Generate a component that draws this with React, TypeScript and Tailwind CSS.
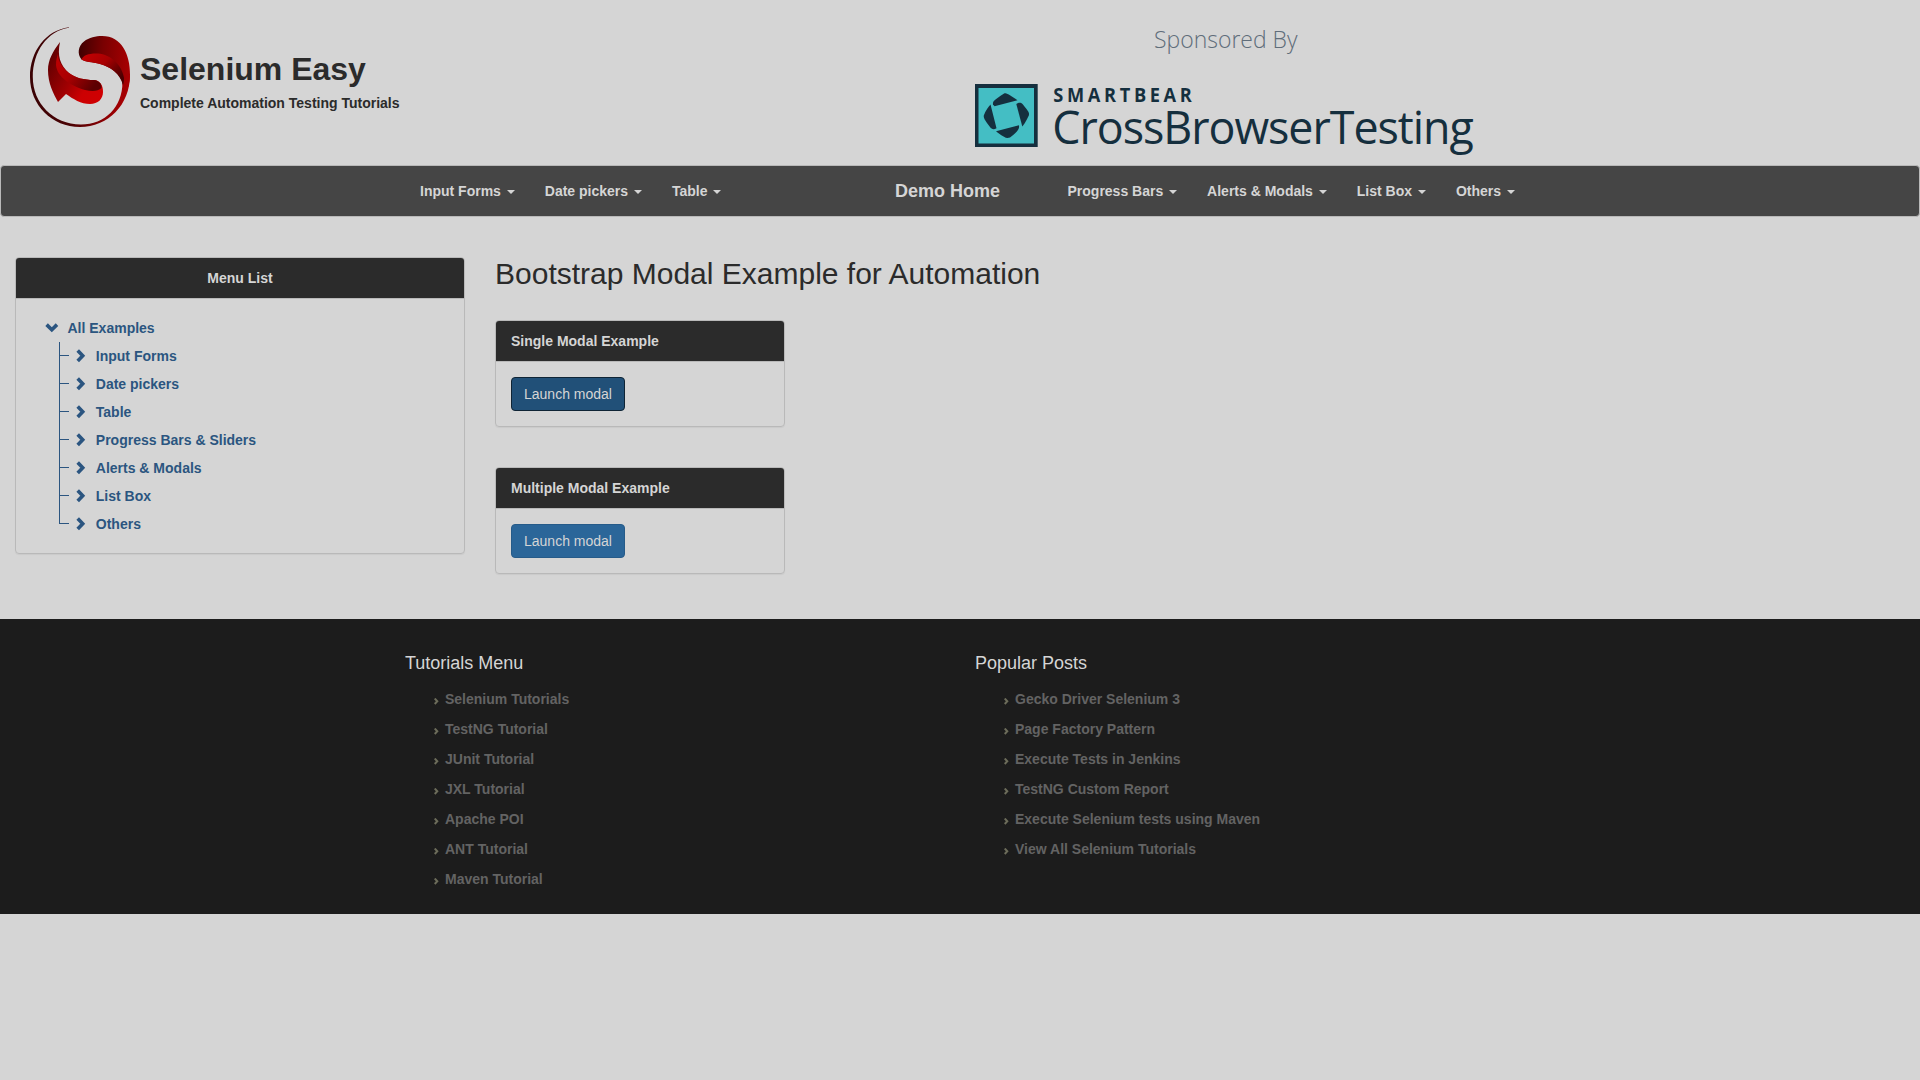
import React from "react";

const leftNav = ["Input Forms", "Date pickers", "Table"];
const rightNav = ["Progress Bars", "Alerts & Modals", "List Box", "Others"];
const treeItems = [
  "Input Forms",
  "Date pickers",
  "Table",
  "Progress Bars & Sliders",
  "Alerts & Modals",
  "List Box",
  "Others",
];
const tutorials = [
  "Selenium Tutorials",
  "TestNG Tutorial",
  "JUnit Tutorial",
  "JXL Tutorial",
  "Apache POI",
  "ANT Tutorial",
  "Maven Tutorial",
];
const posts = [
  "Gecko Driver Selenium 3",
  "Page Factory Pattern",
  "Execute Tests in Jenkins",
  "TestNG Custom Report",
  "Execute Selenium tests using Maven",
  "View All Selenium Tutorials",
];

function SeleniumLogo() {
  return (
    <svg width="100" height="100" viewBox="0 0 100 100" className="shrink-0">
      <defs>
        <linearGradient id="ring" x1="0" y1="0" x2="1" y2="0">
          <stop offset="0" stopColor="#3a0204" />
          <stop offset="0.4" stopColor="#4a0204" />
          <stop offset="0.75" stopColor="#8c0003" />
          <stop offset="1" stopColor="#b00002" />
        </linearGradient>
        <linearGradient id="cap" x1="0" y1="0.4" x2="1" y2="0.5">
          <stop offset="0" stopColor="#420001" />
          <stop offset="0.45" stopColor="#7a0001" />
          <stop offset="1" stopColor="#a80002" />
        </linearGradient>
        <linearGradient id="fold" x1="0" y1="0" x2="1" y2="0.7">
          <stop offset="0" stopColor="#c60002" />
          <stop offset="0.5" stopColor="#a80002" />
          <stop offset="0.8" stopColor="#6a0001" />
          <stop offset="1" stopColor="#4a0001" />
        </linearGradient>
        <linearGradient id="base" x1="0" y1="0.3" x2="1" y2="0.9">
          <stop offset="0" stopColor="#620001" />
          <stop offset="0.45" stopColor="#a20002" />
          <stop offset="0.7" stopColor="#cc0002" />
          <stop offset="1" stopColor="#d00002" />
        </linearGradient>
        <linearGradient id="band" x1="0" y1="0" x2="1" y2="0.6">
          <stop offset="0" stopColor="#c00002" />
          <stop offset="0.5" stopColor="#a80002" />
          <stop offset="1" stopColor="#5c0001" />
        </linearGradient>
      </defs>
      <path
        d="M39 0.200C16 3 0 24 0 50C0 78 22 100 50 100C78 100 100 78 100 48L92.500 55C92.500 80 75 97.500 51 97.500C23 97.500 2.800 76 2.800 50C2.800 25 17 4 39 0.800Z"
        fill="url(#ring)"
      />
      <path
        d="M51.500 32.500C47 27 48 19 54 14.500C59 10.500 66 9 72 9C82 9 89 13.500 93.500 21C98 28.500 100 37 100 48C100 56 97 66 92 74C93 66 94 59 91.500 53C88 45 80 40 70 37C62 35 55 35 51.500 32.500Z"
        fill="url(#cap)"
      />
      <path
        d="M51.500 32.500C53 28 60 26 68 26.500C81 27.500 92 38 94 51C94 54 93.500 57 93 58C90 47 81 40 70 37C62 35 55 35 51.500 32.500Z"
        fill="url(#fold)"
      />
      <path
        d="M30 15C23 24 18 33 18 43C18 56 23 66 28 75L36 67C43 72 51 77 60 77C68 77 73 72 73 65C73 58 70 53.500 64 53C54 53 46 51 39 46C30 38 27 29 30 15Z"
        fill="url(#base)"
      />
      <path
        d="M28 27C28 33 31 40 39 46C46 51 54 53 64 53C69 53.500 72 57 71.500 61C68 64.500 62 64.500 55 63C41 59 27 50 26 38C26 33 27 30 28 27Z"
        fill="url(#band)"
      />
    </svg>
  );
}

function SponsorLogo() {
  return (
    <svg width="510" height="85" viewBox="975 80 510 85">
      <rect x="975" y="84" width="62.700" height="63" fill="#152f3e" />
      <rect x="978.500" y="88" width="55.500" height="55.500" fill="#44bec4" />
      <g fill="#152f3e">
        <path d="M993 104.500C992.500 101 994 100 1004.500 93.200C1007 93.200 1009 94.300 1017.500 100.200L994.500 106.300Z" />
        <path d="M1016.300 104C1019 102 1021 102.500 1022.500 104C1029 112 1029.500 113 1028.800 115.500C1026 121.500 1024 124.500 1022.300 126.500Z" />
        <path d="M1019 125.200C1019.500 129 1018 131 1010 137.500C1007.500 138.400 1006 138 1004 136.800C1000 134.500 998 133 996 131.200Z" />
        <path d="M996.500 128.300C993.500 130 991.500 129 990 127C984.500 119.500 983.500 118 983.800 115.500C985.500 110.500 988.500 107 990.500 104.500Z" />
      </g>
      <text
        transform="translate(1053.300 102.200) scale(0.93 1)"
        fontFamily="'Open Sans', sans-serif"
        fontWeight="700"
        fontSize="19.600"
        textLength="149"
        fill="#152f3e"
      >
        SMARTBEAR
      </text>
      <text
        x="1052.300"
        y="143.500"
        fontFamily="'Open Sans', sans-serif"
        fontWeight="400"
        fontSize="44.800"
        textLength="421.500"
        fill="#152f3e"
      >
        CrossBrowserTesting
      </text>
    </svg>
  );
}

function NavItem({ label }: { label: string }) {
  return (
    <li className="px-[15px] py-[15px]">
      <a className="block whitespace-pre">
        {label + " "}
        <span className="ml-[2px] inline-block h-0 w-0 border-x-4 border-t-4 border-x-transparent border-t-[#d5d5d5] align-middle" />
      </a>
    </li>
  );
}

function Chevron({ down }: { down?: boolean }) {
  return (
    <svg width="14" height="14" viewBox="0 0 14 14" className="shrink-0">
      <path
        d={down ? "M1.600 3.600L6.800 8.700L12 3.600" : "M3.700 1.500L8.700 6.700L3.700 11.900"}
        fill="none"
        stroke="#2b5580"
        strokeWidth="3.600"
      />
    </svg>
  );
}

function Panel({
  title,
  center,
  children,
}: {
  title: string;
  center?: boolean;
  children: React.ReactNode;
}) {
  return (
    <section className="rounded-[4px] border border-[#b9b9b9] shadow-[0_1px_1px_rgba(0,0,0,0.05)]">
      <h3
        className={
          "rounded-t-[3px] border-b border-[#b9b9b9] bg-[#2b2b2b] px-[15px] py-[10px] font-bold text-[#d5d5d5] " +
          (center ? "text-center" : "")
        }
      >
        {title}
      </h3>
      {children}
    </section>
  );
}

function FooterColumn({ title, links }: { title: string; links: string[] }) {
  return (
    <div className="w-[570px]">
      <h4 className="text-[18px] leading-5 text-[#d5d5d5]">{title}</h4>
      <ul className="mt-[11px] pl-[29px] font-bold text-[#636363]">
        {links.map((link) => (
          <li key={link} className="flex h-[30px] items-center">
            <svg width="5" height="7" viewBox="0 0 5 7" className="mt-[5px] mr-[6px]">
              <path d="M0.700 0.500L3.300 3.200L0.700 6" fill="none" stroke="#6c6c5a" strokeWidth="2" />
            </svg>
            {link}
          </li>
        ))}
      </ul>
    </div>
  );
}

export default function App() {
  return (
    <div className="min-h-screen bg-[#d5d5d5] font-['Liberation_Sans',Arial,sans-serif] text-[14px] leading-5 text-[#2b2b2b]">
      <header className="flex h-[165px]">
        <div className="flex w-[975px] pt-[27px] pl-[30px]">
          <SeleniumLogo />
          <div className="ml-[10px] pt-[24px] font-bold">
            <h1 className="text-[32px] leading-9">Selenium Easy</h1>
            <p className="mt-[6px]">Complete Automation Testing Tutorials</p>
          </div>
        </div>
        <div className="w-[510px]">
          <div className="h-[80px] pt-[22px] pl-[179px]">
            <p className="origin-left scale-x-[0.957] font-['Open_Sans',sans-serif] text-[24px] leading-[34px] font-light text-[#5f6d7a]">
              Sponsored By
            </p>
          </div>
          <SponsorLogo />
        </div>
      </header>

      <nav className="flex h-[52px] rounded-[4px] border border-[#b9b9b9] bg-[#454545] pl-[404px] font-bold text-[#d5d5d5]">
        <ul className="flex w-[476px]">
          {leftNav.map((label) => (
            <NavItem key={label} label={label} />
          ))}
        </ul>
        <a className="w-[171.5px] py-[15px] pl-[14px] text-[18px]">Demo Home</a>
        <ul className="flex">
          {rightNav.map((label) => (
            <NavItem key={label} label={label} />
          ))}
        </ul>
      </nav>

      <main className="flex h-[402px] pt-[40px]">
        <aside className="w-[480px] px-[15px]">
          <Panel title="Menu List" center>
            <div className="h-[254px] pt-[15px] pl-[29px] font-bold text-[#2b5580]">
              <div className="flex h-[28px] items-center">
                <Chevron down />
                <span className="ml-[8.5px]">All Examples</span>
              </div>
              <ul className="ml-[14px]">
                {treeItems.map((item, i) => (
                  <li key={item} className="flex h-[28px] items-center">
                    <span className="flex h-[28px] w-[10px] flex-col">
                      <span className="h-[14px] border-b border-l border-[#2b5580]" />
                      <span
                        className={
                          i < treeItems.length - 1 ? "h-[14px] border-l border-[#2b5580]" : "h-[14px]"
                        }
                      />
                    </span>
                    <span className="ml-[5px] flex items-center">
                      <Chevron />
                      <span className="ml-[7.8px]">{item}</span>
                    </span>
                  </li>
                ))}
              </ul>
            </div>
          </Panel>
        </aside>

        <div className="pl-[15px]">
          <h2 className="text-[30px] leading-[33px]">Bootstrap Modal Example for Automation</h2>
          <div className="mt-[30px] flex w-[290px] flex-col gap-10">
            <Panel title="Single Modal Example">
              <div className="p-[15px]">
                <button className="block rounded-[4px] border border-[#0f2435] bg-[#215078] px-3 py-[6px] text-[#d5d5d5]">
                  Launch modal
                </button>
              </div>
            </Panel>
            <Panel title="Multiple Modal Example">
              <div className="p-[15px]">
                <button className="block rounded-[4px] border border-[#265b89] bg-[#2b6699] px-3 py-[6px] text-[#d5d5d5]">
                  Launch modal
                </button>
              </div>
            </Panel>
          </div>
        </div>
      </main>

      <footer className="flex h-[295px] bg-[#1c1c1c] pt-[34px] pl-[405px]">
        <FooterColumn title="Tutorials Menu" links={tutorials} />
        <FooterColumn title="Popular Posts" links={posts} />
      </footer>
    </div>
  );
}
